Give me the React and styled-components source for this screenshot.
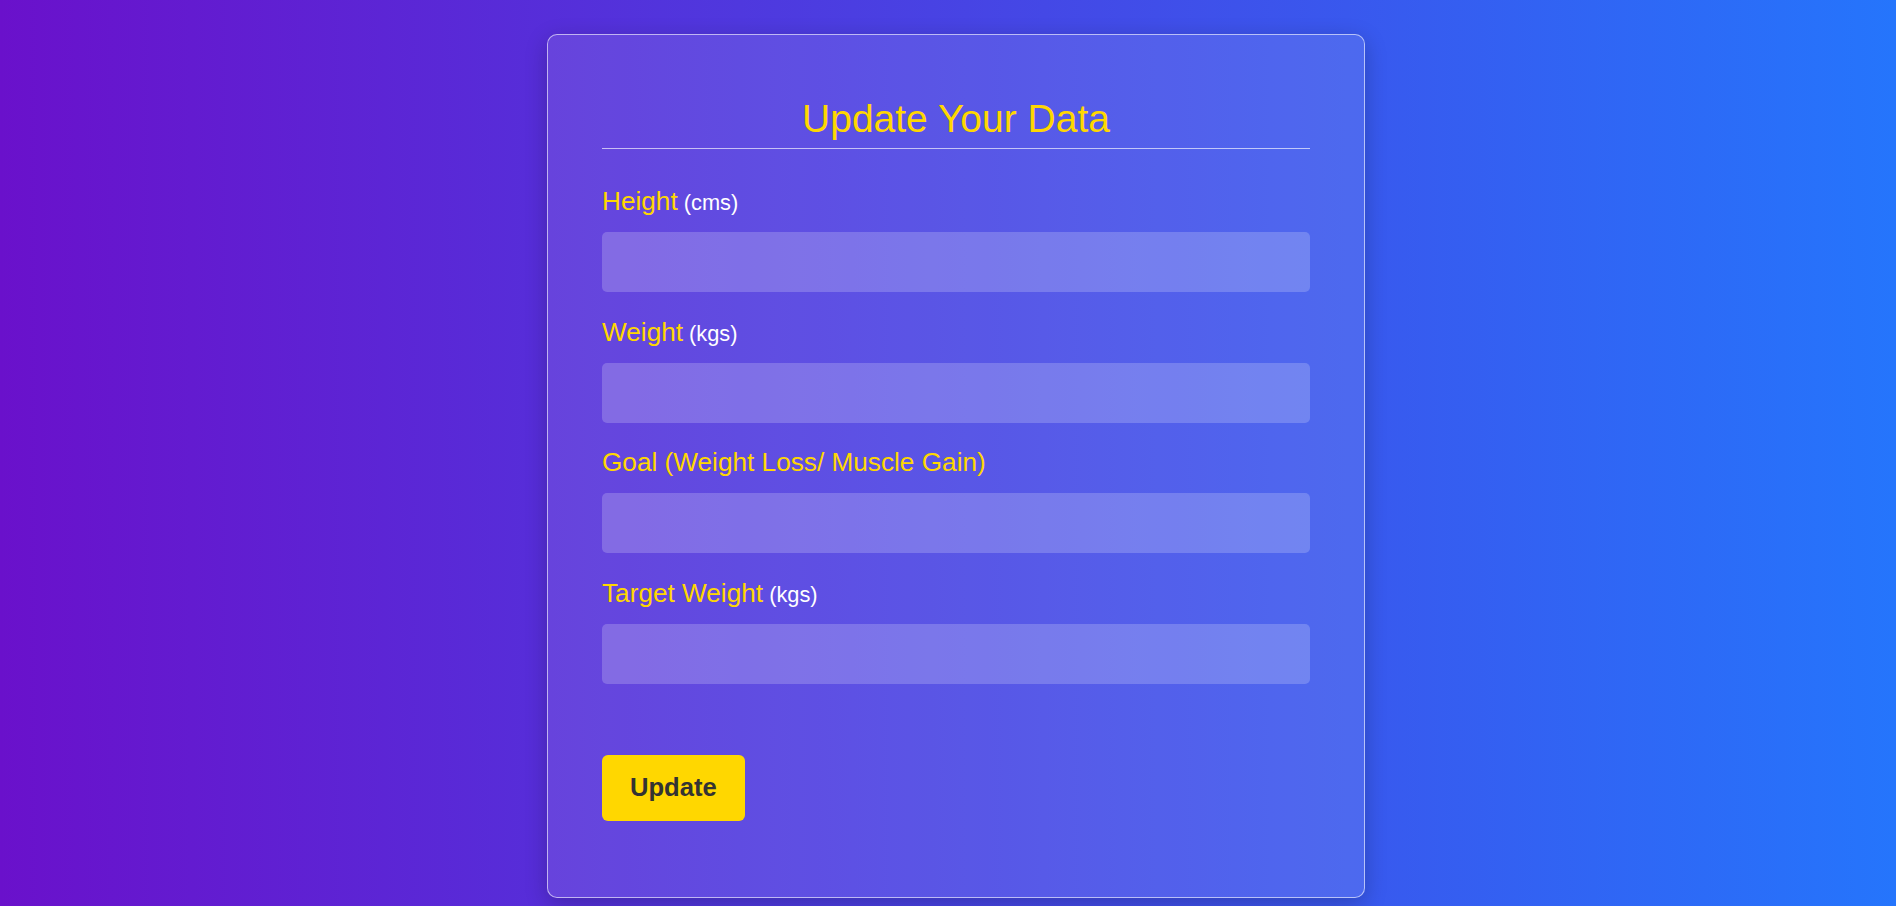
import React from "react";
import styled, { createGlobalStyle } from "styled-components";

const GlobalStyle = createGlobalStyle`
  html, body {
    margin: 0;
    padding: 0;
    height: 100%;
    overflow: hidden;
  }
  body {
    font-family: "Liberation Sans", Arial, sans-serif;
    background: linear-gradient(to right, #6a11cb, #2575fc);
  }
  * { box-sizing: border-box; }
`;

const Page = styled.div`
  min-height: 100vh;
  display: flex;
  justify-content: center;
  align-items: flex-start;
  padding: 34px 0 8px 16px;
  background: linear-gradient(to right, #6a11cb, #2575fc);
`;

const Card = styled.form`
  width: 818px;
  display: flex;
  flex-direction: column;
  padding: 62px 54px 76px;
  background: rgba(255, 255, 255, 0.1);
  border: 1px solid rgba(255, 255, 255, 0.6);
  border-radius: 10px;
  box-shadow: 0 6px 22px rgba(0, 0, 0, 0.22);
`;

const Title = styled.h2`
  margin: 0;
  font-family: "Liberation Sans", Arial, sans-serif;
  font-size: 39px;
  line-height: 44px;
  height: 44px;
  font-weight: 400;
  color: #ffd700;
  text-align: center;
  padding: 0;
  box-sizing: content-box;
  padding-bottom: 7px;
  border-bottom: 1px solid rgba(255, 255, 255, 0.65);
`;

const Fields = styled.div`
  display: flex;
  flex-direction: column;
  gap: 24.67px;
  margin-top: 37px;
`;

const Field = styled.div`
  display: flex;
  flex-direction: column;
  gap: 16px;
`;

const Label = styled.label`
  display: block;
  height: 30px;
  font-family: "Liberation Sans", Arial, sans-serif;
  font-size: 26.2px;
  line-height: 30px;
  color: #ffd700;
  white-space: nowrap;
`;

const Unit = styled.span`
  font-size: 21.8px;
  line-height: 1;
  color: #ffffff;
`;

const Input = styled.input`
  display: block;
  height: 60px;
  width: 100%;
  margin: 0;
  border: none;
  border-radius: 5px;
  background: rgba(255, 255, 255, 0.2);
  padding: 0 16px;
  font-family: "Liberation Sans", Arial, sans-serif;
  font-size: 20px;
  color: #fff;
  outline: none;
`;

const Button = styled.button`
  align-self: flex-start;
  margin-top: 71px;
  height: 66px;
  padding: 0 28px;
  border: none;
  border-radius: 6px;
  background: #ffd700;
  color: #333333;
  font-family: "Liberation Sans", Arial, sans-serif;
  font-size: 25.6px;
  font-weight: 700;
  cursor: pointer;
`;

const fields = [
  { id: "height", label: "Height", unit: "(cms)" },
  { id: "weight", label: "Weight", unit: "(kgs)" },
  { id: "goal", label: "Goal (Weight Loss/ Muscle Gain)", unit: null },
  { id: "target", label: "Target Weight", unit: "(kgs)" },
];

export default function App() {
  return (
    <>
      <GlobalStyle />
      <Page>
        <Card onSubmit={(e) => e.preventDefault()}>
          <Title>Update Your Data</Title>
          <Fields>
            {fields.map((f) => (
              <Field key={f.id}>
                <Label htmlFor={f.id}>
                  {f.label}
                  {f.unit && <Unit> {f.unit}</Unit>}
                </Label>
                <Input id={f.id} type="text" />
              </Field>
            ))}
          </Fields>
          <Button type="submit">Update</Button>
        </Card>
      </Page>
    </>
  );
}
